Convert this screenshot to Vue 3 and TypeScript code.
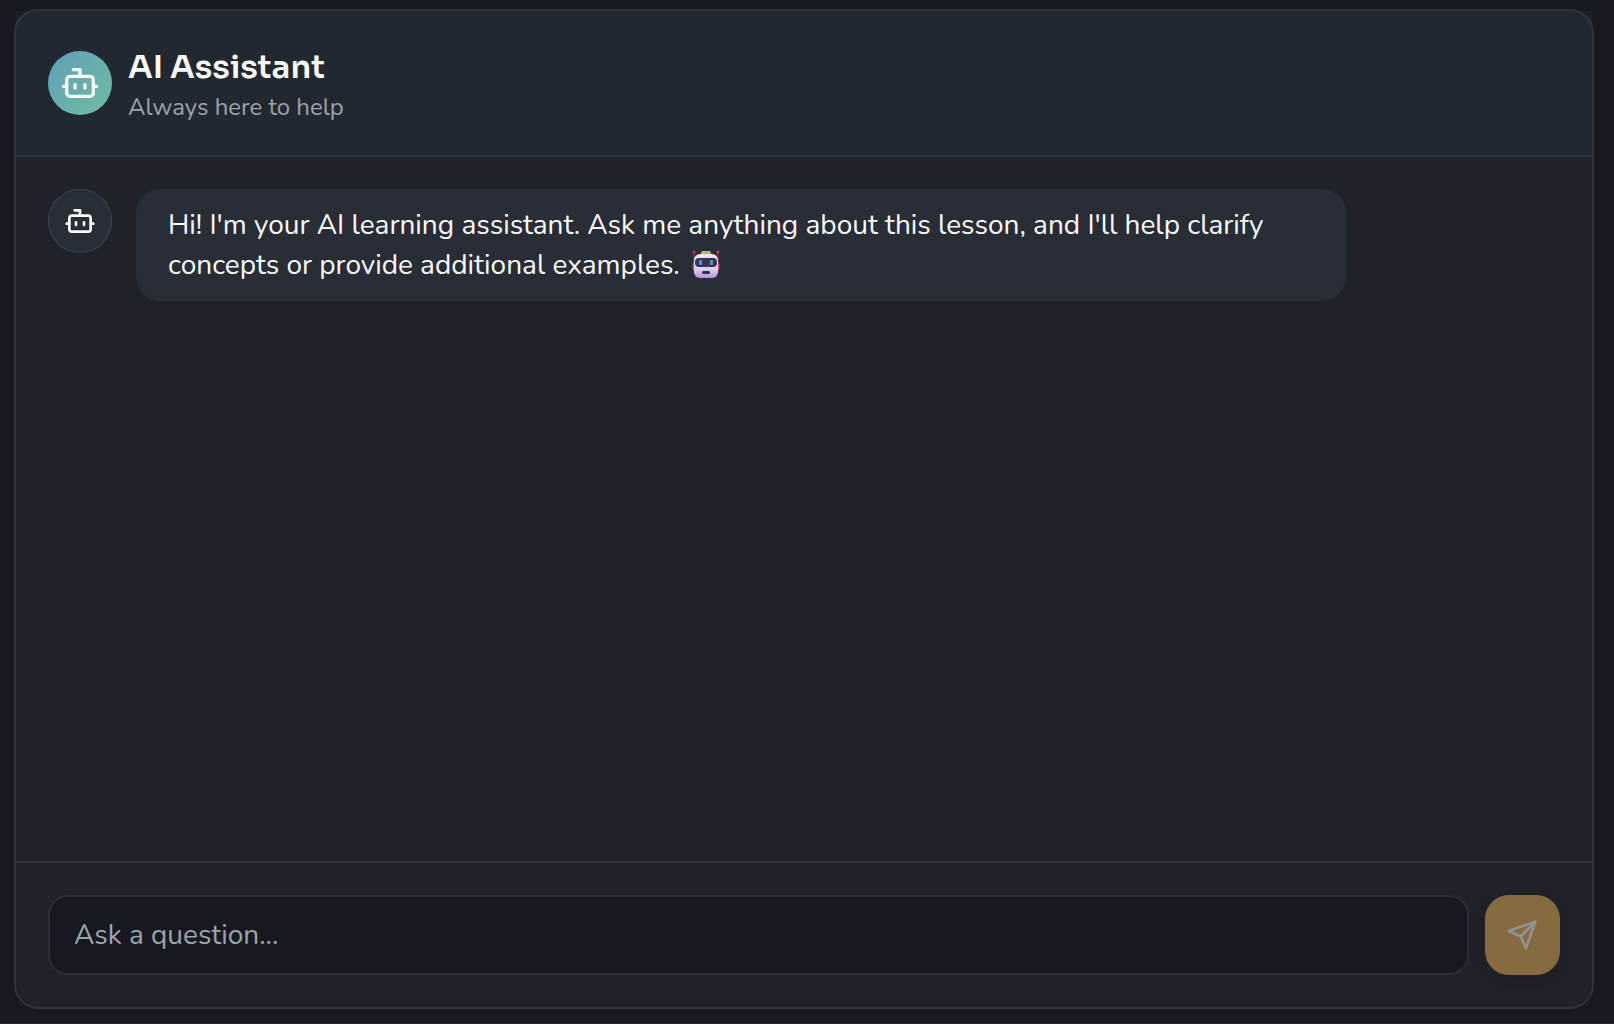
<script setup lang="ts">
import { ref } from 'vue'

interface Message {
  id: number
  text: string
}

const messages = ref<Message[]>([
  {
    id: 1,
    text: "Hi! I'm your AI learning assistant. Ask me anything about this lesson, and I'll help clarify concepts or provide additional examples.",
  },
])
const question = ref('')
</script>

<template>
  <main class="page">
    <section class="panel" aria-labelledby="assistant-title">
      <header class="header">
        <div class="avatar avatar-brand">
          <svg class="icon icon-lg" viewBox="0 0 24 24" aria-hidden="true">
            <path d="M12 8V4H8" />
            <rect x="4" y="8" width="16" height="12" rx="2" />
            <path d="M2 14h2M20 14h2M15 13v2M9 13v2" />
          </svg>
        </div>
        <div>
          <h1 id="assistant-title" class="title">AI Assistant</h1>
          <p class="subtitle">Always here to help</p>
        </div>
      </header>

      <div class="messages">
        <article v-for="message in messages" :key="message.id" class="message">
          <div class="avatar avatar-muted">
            <svg class="icon" viewBox="0 0 24 24" aria-hidden="true">
              <path d="M12 8V4H8" />
              <rect x="4" y="8" width="16" height="12" rx="2" />
              <path d="M2 14h2M20 14h2M15 13v2M9 13v2" />
            </svg>
          </div>
          <p class="bubble">
            {{ message.text }}
            <svg class="emoji" viewBox="0 0 28 28" role="img" aria-label="Robot">
              <defs>
                <linearGradient id="robot-face" x1="0" y1="0" x2="0" y2="1">
                  <stop offset="0" stop-color="#eee9f3" />
                  <stop offset="0.65" stop-color="#d9cde5" />
                  <stop offset="1" stop-color="#b394dc" />
                </linearGradient>
              </defs>
              <path d="M2 2v12M26 2v12" stroke="#b03a5c" stroke-width="1" />
              <circle cx="2" cy="2" r="1.4" fill="#cf3d5c" />
              <circle cx="26" cy="2" r="1.4" fill="#cf3d5c" />
              <path d="M3 12v9C1 21 .5 19 .5 16.500S1 12 3 12zM25 12v9c2 0 2.500-2 2.500-4.500S27 12 25 12z" fill="#d04768" />
              <rect x="9" y="1" width="10" height="4" rx="1.500" fill="#dcaa3e" />
              <rect x="2" y="4" width="24" height="24" rx="6" fill="url(#robot-face)" />
              <rect x="3" y="8" width="22" height="9" rx="4" fill="#3c3258" />
              <rect x="7" y="10" width="3" height="5" rx="1" fill="#4298d8" />
              <rect x="18" y="10" width="3" height="5" rx="1" fill="#4298d8" />
              <rect x="10" y="21" width="8" height="3" rx="1.500" fill="#342a4a" />
            </svg>
          </p>
        </article>
      </div>

      <form class="composer" @submit.prevent>
        <input
          v-model="question"
          class="field"
          type="text"
          placeholder="Ask a question..."
          aria-label="Ask a question"
        />
        <button class="send" type="submit" aria-label="Send" :disabled="!question.trim()">
          <svg class="icon" viewBox="0 0 24 24" aria-hidden="true">
            <path d="m22 2-7 20-4-9-9-4Z" />
            <path d="M22 2 11 13" />
          </svg>
        </button>
      </form>
    </section>
  </main>
</template>

<style>
body {
  margin: 0;
  background: #171920;
}
</style>

<style scoped>
.page {
  box-sizing: border-box;
  display: flex;
  min-height: 100vh;
  padding: 9px 20px 14px 14px;
  border-bottom: 1px solid #24242c;
  background: #171920;
  color: #fafafa;
  font-family: Nunito, "Open Sans", sans-serif;
}

.panel {
  display: flex;
  flex: 1;
  flex-direction: column;
  min-width: 0;
  border: 2px solid #30323d;
  border-radius: 24px;
  background: #20222a;
}

.header {
  display: flex;
  align-items: center;
  gap: 16px;
  padding: 32px;
  border-bottom: 2px solid #30323d;
  background: rgb(80 160 150 / 5%);
}

.title {
  margin: 0;
  font: 600 32px/48px Sora, Inter, sans-serif;
}

.subtitle {
  margin: 0;
  color: #9ca3af;
  font-size: 24px;
  line-height: 32px;
}

.avatar {
  display: flex;
  flex: none;
  align-items: center;
  justify-content: center;
  width: 64px;
  height: 64px;
  border-radius: 50%;
}

.avatar-brand {
  background: linear-gradient(135deg, #5f9fb8, #70bca4);
}

.avatar-muted {
  background: #292d35;
  box-shadow: inset 0 0 0 1px #324a52;
}

.icon {
  width: 32px;
  height: 32px;
  fill: none;
  stroke: currentColor;
  stroke-width: 2;
  stroke-linecap: round;
  stroke-linejoin: round;
}

.icon-lg {
  width: 40px;
  height: 40px;
}

.messages {
  flex: 1;
  padding: 32px;
}

.message {
  display: flex;
  align-items: flex-start;
  gap: 24px;
}

.bubble {
  box-sizing: border-box;
  max-width: 80%;
  margin: 0;
  padding: 16px 32px;
  border-radius: 24px;
  background: #292d35;
  font-size: 28px;
  line-height: 40px;
}

.emoji {
  width: 28px;
  height: 28px;
  margin: 0 5px;
  vertical-align: -4px;
}

.composer {
  display: flex;
  gap: 16px;
  padding: 32px;
  border-top: 2px solid #30323d;
}

.field {
  box-sizing: border-box;
  flex: 1;
  min-width: 0;
  height: 80px;
  padding: 0 24px;
  border: 2px solid #2b2e36;
  border-radius: 20px;
  outline: none;
  background: #171920;
  color: inherit;
  font: 28px/40px Nunito, "Open Sans", sans-serif;
}

.field::placeholder {
  color: #9ca3af;
  opacity: 1;
}

.send {
  display: flex;
  align-items: center;
  justify-content: center;
  box-sizing: border-box;
  width: 75px;
  padding: 0 22px 0 21px;
  border: 0;
  border-radius: 24px;
  background: #876b40;
  box-shadow: 0 4px 12px rgb(0 0 0 / 8%);
  color: #929297;
}
</style>
